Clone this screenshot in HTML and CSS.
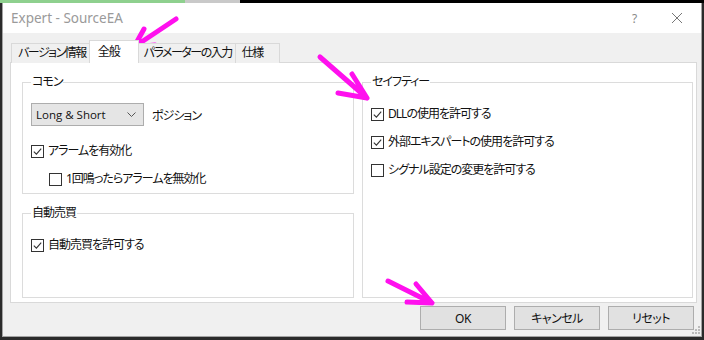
FILE: index.html
```html
<!DOCTYPE html>
<html lang="ja">
<head>
<meta charset="utf-8">
<title>Expert - SourceEA</title>
<link rel="stylesheet" href="styles.css">
</head>
<body>
<div class="strip"></div>
<div class="window">
  <div class="titlebar">
    <span class="title">Expert - SourceEA</span>
    <span class="cap help">?</span>
    <span class="cap close"><svg width="10" height="10" viewBox="0 0 10 10"><path d="M0 0L10 10M10 0L0 10" stroke="#777" stroke-width="1"/></svg></span>
  </div>
  <div class="body">
    <div class="tabs">
      <div class="tab">バージョン情報</div>
      <div class="tab active">全般</div>
      <div class="tab">パラメーターの入力</div>
      <div class="tab">仕様</div>
    </div>
    <div class="panel">
      <div class="col">
        <fieldset class="group common">
          <legend>コモン</legend>
          <div class="combo-row">
            <div class="combo"><span>Long &amp; Short</span><svg width="9" height="5" viewBox="0 0 9 5"><path d="M.5.5l4 4 4-4" stroke="#555" fill="none"/></svg></div>
            <span class="combo-label">ポジション</span>
          </div>
          <label class="check first"><svg class="cb" viewBox="0 0 13 13"><rect x=".5" y=".5" width="12" height="12" fill="#fff" stroke="#333"/><path d="M2.8 6.6l2.6 2.6 4.8-5.6" fill="none" stroke="#333" stroke-width="1.1"/></svg>アラームを有効化</label>
          <label class="check indent"><svg class="cb" viewBox="0 0 13 13"><rect x=".5" y=".5" width="12" height="12" fill="#fff" stroke="#333"/></svg>1回鳴ったらアラームを無効化</label>
        </fieldset>
        <fieldset class="group auto">
          <legend>自動売買</legend>
          <label class="check first"><svg class="cb" viewBox="0 0 13 13"><rect x=".5" y=".5" width="12" height="12" fill="#fff" stroke="#333"/><path d="M2.8 6.6l2.6 2.6 4.8-5.6" fill="none" stroke="#333" stroke-width="1.1"/></svg>自動売買を許可する</label>
        </fieldset>
      </div>
      <fieldset class="group safety">
        <legend>セイフティー</legend>
        <label class="check first"><svg class="cb" viewBox="0 0 13 13"><rect x=".5" y=".5" width="12" height="12" fill="#fff" stroke="#333"/><path d="M2.8 6.6l2.6 2.6 4.8-5.6" fill="none" stroke="#333" stroke-width="1.1"/></svg>DLLの使用を許可する</label>
        <label class="check"><svg class="cb" viewBox="0 0 13 13"><rect x=".5" y=".5" width="12" height="12" fill="#fff" stroke="#333"/><path d="M2.8 6.6l2.6 2.6 4.8-5.6" fill="none" stroke="#333" stroke-width="1.1"/></svg>外部エキスパートの使用を許可する</label>
        <label class="check"><svg class="cb" viewBox="0 0 13 13"><rect x=".5" y=".5" width="12" height="12" fill="#fff" stroke="#333"/></svg>シグナル設定の変更を許可する</label>
      </fieldset>
    </div>
    <div class="buttons">
      <button class="btn">OK</button>
      <button class="btn">キャンセル</button>
      <button class="btn">リセット</button>
    </div>
  </div>
  <svg class="grip" width="8" height="8" viewBox="0 0 8 8"><g fill="#bbb"><rect x="6" y="0" width="2" height="2"/><rect x="3" y="3" width="2" height="2"/><rect x="6" y="3" width="2" height="2"/><rect x="0" y="6" width="2" height="2"/><rect x="3" y="6" width="2" height="2"/><rect x="6" y="6" width="2" height="2"/></g></svg>
</div>
<svg class="marks" width="704" height="340" viewBox="0 0 704 340">
  <g fill="none" stroke="#ff10ee" stroke-width="5" stroke-linecap="round" stroke-linejoin="round">
    <path d="M176 19L134 47M144 29L134 47L155 45"/>
    <path d="M320 57L367 98M352 74L367 98L338 93"/>
    <path d="M388 281L432 303M416 284L432 303L407 302"/>
  </g>
</svg>
</body>
</html>
```

FILE: styles.css
```css
* { box-sizing: border-box; }

html, body {
  margin: 0;
  padding: 0;
}

body {
  width: 704px;
  height: 340px;
  overflow: hidden;
  position: relative;
  background: #2b2b2b;
  font-family: "Noto Sans", "Noto Sans CJK JP", sans-serif;
  font-size: 12px;
  font-feature-settings: "palt" 1;
  letter-spacing: -1px;
  color: #111;
}

.strip {
  height: 3px;
  background: linear-gradient(to right, #8ed08e 0, #8ed08e 185px, #c9c9c9 185px, #c9c9c9 240px, #000 240px);
}

.window {
  position: relative;
  margin-left: 2px;
  width: 700px;
  height: 334px;
  border: 1px solid #a3a3a3;
  border-top: none;
  background: #f0f0f0;
  display: flex;
  flex-direction: column;
}

.titlebar {
  height: 30px;
  background: #fff;
  display: flex;
  align-items: center;
  padding-left: 8px;
}

.title {
  color: #9a9a9a;
  font-size: 13.5px;
  letter-spacing: 0;
  flex: 1;
}

.cap {
  width: 46px;
  height: 30px;
  display: flex;
  align-items: center;
  justify-content: center;
  color: #8a8a8a;
}

.help { font-size: 12px; padding-left: 5px; letter-spacing: 0; }
.close { padding-right: 2px; }

.body {
  flex: 1;
  padding: 7px 4px 0 7px;
  display: flex;
  flex-direction: column;
}

.tabs {
  display: flex;
  align-items: flex-end;
  height: 23px;
  padding-left: 1px;
  position: relative;
  z-index: 1;
  margin-bottom: -1px;
}

.tab {
  height: 20px;
  min-width: 45px;
  line-height: 18px;
  padding: 0 3px 0 6px;
  border: 1px solid #d9d9d9;
  border-bottom: none;
  margin-left: -1px;
  background: #f0f0f0;
  white-space: nowrap;
  letter-spacing: -1.5px;
}

.tab:first-child { margin-left: 0; }

.tab.active {
  height: 23px;
  min-width: 50px;
  line-height: 22px;
  background: #fff;
  padding: 0 3px 0 8px;
  margin-left: -1px;
  margin-right: -1px;
  position: relative;
  letter-spacing: -1px;
}

.panel {
  height: 241px;
  background: #fff;
  border: 1px solid #d9d9d9;
  display: grid;
  grid-template-columns: 332px 331px;
  column-gap: 8px;
  padding: 11px 3px 4px 11px;
}

.col {
  display: flex;
  flex-direction: column;
  gap: 11px;
}

.group {
  margin: 0;
  border: 1px solid #dcdcdc;
  padding: 0 8px 0 8px;
  min-width: 0;
}

.group legend {
  padding: 0 1px;
  margin-left: 0;
  line-height: 16px;
  height: 16px;
}

.common { height: 120px; }
.auto { flex: 1; }

.combo-row {
  display: flex;
  align-items: center;
  gap: 8px;
  margin-top: 13px;
}

.combo {
  width: 113px;
  height: 23px;
  background: #e5e5e5;
  border: 1px solid #adadad;
  display: flex;
  align-items: center;
  justify-content: space-between;
  padding: 0 7px 0 4px;
  font-family: "Open Sans", "Noto Sans", sans-serif;
  font-size: 11.5px;
  letter-spacing: 0;
}

.check {
  display: flex;
  align-items: center;
  gap: 4px;
  height: 28px;
  line-height: 16px;
  white-space: nowrap;
}

.check.first { margin-top: 10px; }
.common .check.first { margin-top: 11px; }
.check.indent { padding-left: 18px; }
.safety .check.first { margin-top: 10px; }

.cb {
  width: 13px;
  height: 13px;
  flex: none;
}

.buttons {
  display: flex;
  justify-content: flex-end;
  gap: 8px;
  margin-top: 3px;
  padding-right: 3px;
}

.btn {
  width: 86px;
  height: 24px;
  background: #e1e1e1;
  border: 1px solid #adadad;
  font-family: inherit;
  font-size: 12px;
  font-feature-settings: "palt" 1;
  letter-spacing: -0.5px;
  color: #111;
  padding: 0;
  margin: 0;
}

.grip {
  position: absolute;
  right: 1px;
  bottom: 2px;
}

.marks {
  position: absolute;
  left: 0;
  top: 0;
  pointer-events: none;
}
```
